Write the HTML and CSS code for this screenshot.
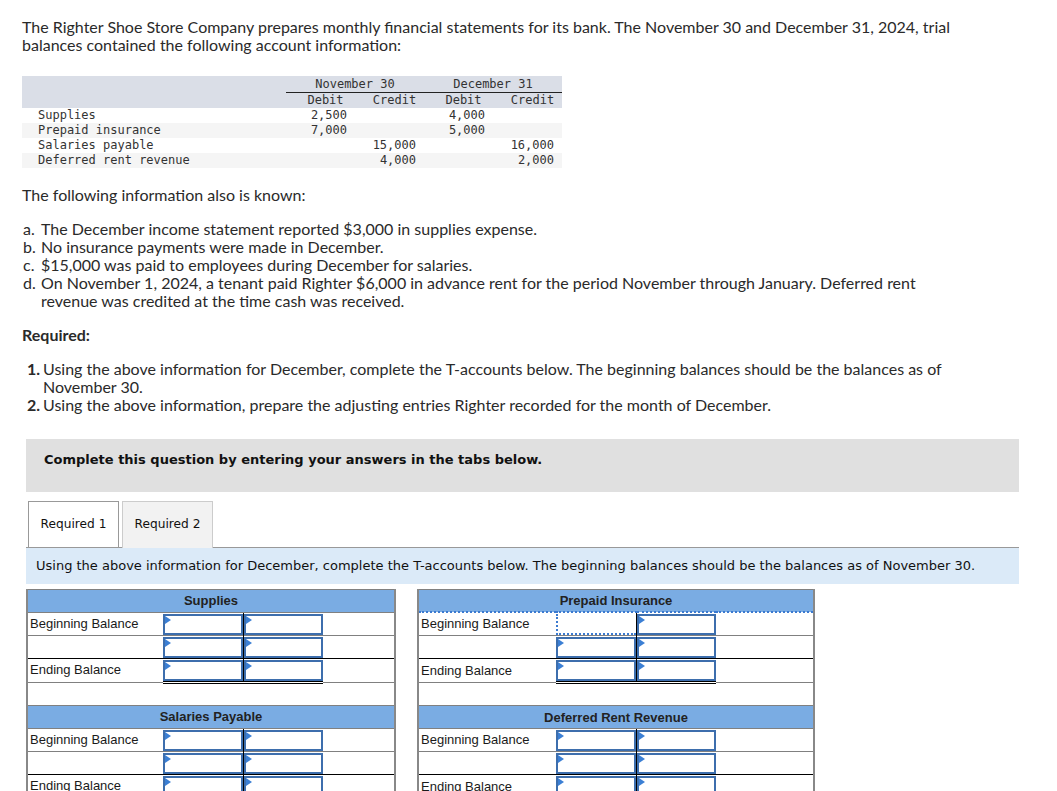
FILE: index.html
```html
<!DOCTYPE html>
<html>
<head>
<meta charset="utf-8">
<link rel="stylesheet" href="styles.css">
</head>
<body>
<div class="page">
  <p class="intro">The Righter Shoe Store Company prepares monthly financial statements for its bank. The November 30 and December 31, 2024, trial balances contained the following account information:</p>

  <table class="tb">
    <thead>
      <tr class="tb-h1"><th class="tb-lab"></th><th colspan="2" class="tb-grp">November 30</th><th colspan="2" class="tb-grp">December 31</th></tr>
      <tr class="tb-h2"><th class="tb-lab"></th><th>Debit</th><th>Credit</th><th>Debit</th><th>Credit</th></tr>
    </thead>
    <tbody>
      <tr><td class="tb-lab">Supplies</td><td>2,500</td><td></td><td>4,000</td><td></td></tr>
      <tr class="alt"><td class="tb-lab">Prepaid insurance</td><td>7,000</td><td></td><td>5,000</td><td></td></tr>
      <tr><td class="tb-lab">Salaries payable</td><td></td><td>15,000</td><td></td><td>16,000</td></tr>
      <tr class="alt"><td class="tb-lab">Deferred rent revenue</td><td></td><td>4,000</td><td></td><td>2,000</td></tr>
    </tbody>
  </table>

  <p class="para known">The following information also is known:</p>
  <ol class="facts">
    <li><span class="mk">a.</span><span>The December income statement reported $3,000 in supplies expense.</span></li>
    <li><span class="mk">b.</span><span>No insurance payments were made in December.</span></li>
    <li><span class="mk">c.</span><span>$15,000 was paid to employees during December for salaries.</span></li>
    <li><span class="mk">d.</span><span>On November 1, 2024, a tenant paid Righter $6,000 in advance rent for the period November through January. Deferred rent revenue was credited at the time cash was received.</span></li>
  </ol>

  <p class="para req-title">Required:</p>
  <ol class="req">
    <li><span class="mk">1.</span><span>Using the above information for December, complete the T-accounts below. The beginning balances should be the balances as of November 30.</span></li>
    <li><span class="mk">2.</span><span>Using the above information, prepare the adjusting entries Righter recorded for the month of December.</span></li>
  </ol>

  <div class="notice">Complete this question by entering your answers in the tabs below.</div>

  <div class="tabs">
    <div class="tab active">Required 1</div>
    <div class="tab">Required 2</div>
  </div>
  <div class="instr">Using the above information for December, complete the T-accounts below. The beginning balances should be the balances as of November 30.</div>

  <div class="taccts">
    <table class="ta ta-left">
      <colgroup><col class="c-lab-l"><col class="c-in-l"><col class="c-in-l"><col></colgroup>
      <tr class="ta-head"><th colspan="4">Supplies</th></tr>
      <tr><td class="lab">Beginning Balance</td><td class="in"><div class="box"></div></td><td class="in in2"><div class="box"></div></td><td></td></tr>
      <tr><td class="lab"></td><td class="in"><div class="box"></div></td><td class="in in2"><div class="box"></div></td><td></td></tr>
      <tr class="end"><td class="lab">Ending Balance</td><td class="in"><div class="box"></div></td><td class="in in2"><div class="box"></div></td><td></td></tr>
      <tr class="gap"><td colspan="4"></td></tr>
      <tr class="ta-head"><th colspan="4">Salaries Payable</th></tr>
      <tr><td class="lab">Beginning Balance</td><td class="in"><div class="box"></div></td><td class="in in2"><div class="box"></div></td><td></td></tr>
      <tr><td class="lab"></td><td class="in"><div class="box"></div></td><td class="in in2"><div class="box"></div></td><td></td></tr>
      <tr class="end"><td class="lab">Ending Balance</td><td class="in"><div class="box"></div></td><td class="in in2"><div class="box"></div></td><td></td></tr>
    </table>

    <table class="ta ta-right">
      <colgroup><col class="c-lab-r"><col class="c-in-r"><col class="c-in-r"><col></colgroup>
      <tr class="ta-head"><th colspan="4">Prepaid Insurance</th></tr>
      <tr class="focus"><td class="lab">Beginning Balance</td><td class="in"><div class="box focused"></div></td><td class="in in2"><div class="box"></div></td><td></td></tr>
      <tr><td class="lab"></td><td class="in"><div class="box"></div></td><td class="in in2"><div class="box"></div></td><td></td></tr>
      <tr class="end"><td class="lab">Ending Balance</td><td class="in"><div class="box"></div></td><td class="in in2"><div class="box"></div></td><td></td></tr>
      <tr class="gap"><td colspan="4"></td></tr>
      <tr class="ta-head"><th colspan="4">Deferred Rent Revenue</th></tr>
      <tr><td class="lab">Beginning Balance</td><td class="in"><div class="box"></div></td><td class="in in2"><div class="box"></div></td><td></td></tr>
      <tr><td class="lab"></td><td class="in"><div class="box"></div></td><td class="in in2"><div class="box"></div></td><td></td></tr>
      <tr class="end"><td class="lab">Ending Balance</td><td class="in"><div class="box"></div></td><td class="in in2"><div class="box"></div></td><td></td></tr>
    </table>
  </div>
</div>
</body>
</html>
```

FILE: styles.css
```css
* { box-sizing: border-box; }
body {
  margin: 0;
  background: #fff;
  color: #2a2a2a;
  font-family: "Lato", "Liberation Sans", sans-serif;
  font-size: 16px;
  line-height: 18px;
}
.page {
  padding: 18px 0 0 22px;
  width: 1001px;
}
p { margin: 0; }
.intro { width: 936px; }

/* trial balance */
.tb {
  margin-top: 22px;
  border-collapse: collapse;
  width: 540px;
  font-family: "DejaVu Sans Mono", monospace;
  font-size: 12px;
  line-height: 15px;
  color: #333;
}
.tb th { font-weight: normal; padding: 0; }
.tb td { padding: 0 8px 0 0; text-align: right; width: 69px; height: 15px; }
.tb thead tr { background: #dadee7; }
.tb-h1 th { height: 16px; padding-top: 2px; }
.tb-h2 th { height: 15px; text-align: center; padding-left: 10px; }
.tb .tb-grp { border-bottom: 1px solid #222; text-align: center; line-height: 13px; }
.tb .tb-lab { width: 264px; text-align: left; padding-left: 16px; }
.tb .alt { background: #f5f5f5; }

.known { margin-top: 18px; }
.facts, .req {
  list-style: none;
  margin: 16px 0 0;
  padding: 0;
  width: 936px;
}
.facts li, .req li { display: flex; }
.facts .mk { width: 19px; flex: none; padding-left: 1px; }
.req .mk { width: 21px; flex: none; padding-left: 5px; font-weight: bold; }
.req-title { margin-top: 16px; font-weight: bold; }

.notice {
  margin: 25px 0 0 4px;
  width: 993px;
  height: 53px;
  background: #e0e0e0;
  padding: 13px 0 0 18px;
  font-family: "DejaVu Sans", Verdana, sans-serif;
  font-weight: bold;
  font-size: 13px;
  line-height: 16px;
  color: #111;
}

.tabs {
  margin: 8px 0 0 4px;
  width: 993px;
  height: 48px;
  display: flex;
  align-items: flex-end;
  gap: 3px;
  padding-left: 2px;
  border-bottom: 1px solid #999;
}
.tab {
  width: 91px;
  height: 47px;
  margin-bottom: -1px;
  border: 1px solid #ccc;
  border-bottom: none;
  background: #f2f2f2;
  font-family: "DejaVu Sans", Verdana, sans-serif;
  font-size: 12.2px;
  line-height: 45px;
  text-align: center;
  color: #111;
}
.tab.active { background: #fff; border-color: #999; border-bottom: 1px solid #999; }

.instr {
  margin-left: 4px;
  width: 993px;
  height: 36px;
  background: #dbeaf8;
  padding-left: 10px;
  font-family: "DejaVu Sans", Verdana, sans-serif;
  font-size: 13px;
  line-height: 36px;
  color: #111;
}

/* T accounts */
.taccts {
  display: flex;
  gap: 21px;
  margin: 5px 0 0 4px;
  align-items: flex-start;
}
.ta {
  border-collapse: collapse;
  border-top: 1px solid #808080;
  border-left: 2px solid #888;
  border-right: 2px solid #888;
  font-family: "Liberation Sans", Arial, sans-serif;
  font-size: 13px;
  color: #1a1a1a;
}
.ta-left { width: 370px; }
.ta-right { width: 398px; }
.c-lab-l { width: 136px; }
.c-in-l { width: 80px; }
.c-lab-r { width: 138px; }
.c-in-r { width: 80px; }
.ta tr { height: 23px; }
.ta td { border-top: 1px solid #808080; padding: 0; height: 22px; }
.ta-head th {
  background: #7aace3;
  font-weight: bold;
  color: #222;
  height: 23px;
  padding: 1px 0 0;
  border-top: 1px solid #808080;
}
.ta .lab { padding-left: 2px; }
.ta .in { padding: 1px 0 0; }
.ta .in2 { border-left: 1px solid #000; }
.ta .end td { border-top: 1px solid #000; }
.ta .end .in { border-bottom: 3px double #000; }
.ta .gap td { height: 22px; }
.box {
  position: relative;
  height: 21px;
  border: 2px solid #3d6ead;
  background: #fff;
}
.box::before {
  content: "";
  position: absolute;
  left: 0;
  top: 0;
  border-top: 4px solid transparent;
  border-bottom: 4px solid transparent;
  border-left: 6px solid #3b7fd4;
}
.box.focused {
  border: 2px dotted #3b7ad0;
  border-top: none;
  border-right: none;
}
.box.focused::before { display: none; }
.ta .focus td { border-top: 2px dotted #3b7ad0; }
```
